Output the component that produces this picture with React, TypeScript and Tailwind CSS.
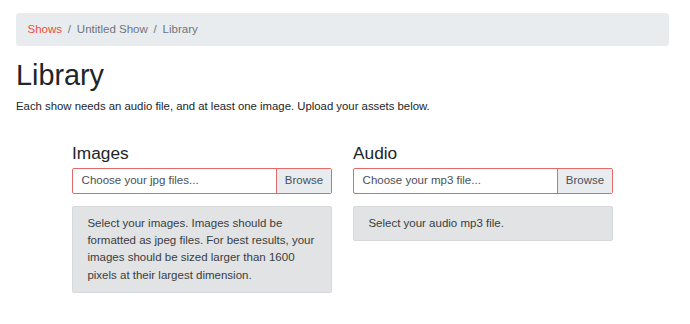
import React from "react";

const font = { fontFamily: '"Liberation Sans", Arial, sans-serif' };

function Uploader({ title, placeholder, help }: { title: string; placeholder: string; help: React.ReactNode }) {
  return (
    <div className="w-[260px]">
      <h4 className="pt-[2px] text-[17.3px] leading-[20.7px] font-medium text-[#212529] mb-[3.8px]">{title}</h4>
      <div className="flex h-[26px] border border-[#e46a6a] rounded-[2px] bg-white text-[11.5px] text-[#495057]">
        <div className="flex-1 flex items-center pl-[8.6px]">{placeholder}</div>
        <div className="w-[55px] flex items-center justify-center bg-[#e9ecef] border-l border-[#e46a6a]">Browse</div>
      </div>
      <div className="mt-[12px] bg-[#e2e3e5] border border-[#d6d8db] rounded-[2px] px-[14.4px] py-[8px] text-[11.5px] leading-[17.25px] text-[#383d41]">
        {help}
      </div>
    </div>
  );
}

export default function App() {
  return (
    <div className="bg-white w-[690px] h-[324px] pl-4 pr-[21px] pt-[13px] text-[#212529]" style={font}>
      <nav className="h-[33px] rounded-[3px] bg-[#e9ecef] px-[11.5px] flex items-center text-[11.5px] text-[#6c757d]">
        <span className="text-[#e8503a]">Shows</span>
        <span className="px-[5.8px]">/</span>
        <span>Untitled Show</span>
        <span className="px-[5.8px]">/</span>
        <span>Library</span>
      </nav>
      <h1 className="mt-[11.5px] text-[28.8px] leading-[1.2] font-medium mb-[5.8px]">Library</h1>
      <p className="text-[11.35px] leading-[17.25px]">
        Each show needs an audio file, and at least one image. Upload your assets below.
      </p>
      <div className="mt-[26.4px] ml-[56px] flex gap-[21px]">
        <Uploader
          title="Images"
          placeholder="Choose your jpg files..."
          help="Select your images. Images should be formatted as jpeg files. For best results, your images should be sized larger than 1600 pixels at their largest dimension."
        />
        <Uploader title="Audio" placeholder="Choose your mp3 file..." help="Select your audio mp3 file." />
      </div>
    </div>
  );
}
